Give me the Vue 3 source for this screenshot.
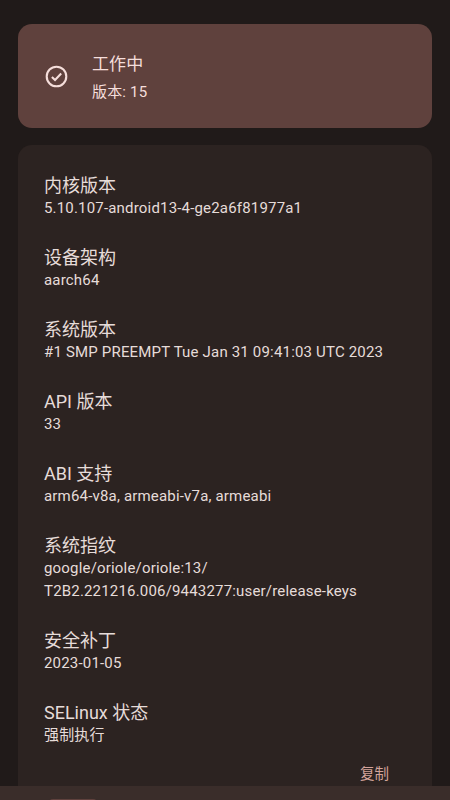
<template>
  <div class="screen">
    <main class="content">
      <section class="status-card">
        <svg class="status-icon" viewBox="0 0 24 24" fill="none" stroke="currentColor" stroke-width="2">
          <circle cx="12" cy="12" r="9.4" />
          <path d="M7.6 12.4l3 3 5.9-6.2" />
        </svg>
        <div class="status-text">
          <h2>工作中</h2>
          <p>版本: 15</p>
        </div>
      </section>

      <section class="info-card">
        <div v-for="item in items" :key="item.label" class="info-item">
          <h3>{{ item.label }}</h3>
          <p>{{ item.value }}</p>
        </div>
        <div class="copy-row">
          <span>复制</span>
        </div>
      </section>
    </main>
    <nav class="bottom-bar">
      <span class="nav-pill"></span>
    </nav>
  </div>
</template>

<script setup>
const items = [
  { label: '内核版本', value: '5.10.107-android13-4-ge2a6f81977a1' },
  { label: '设备架构', value: 'aarch64' },
  { label: '系统版本', value: '#1 SMP PREEMPT Tue Jan 31 09:41:03 UTC 2023' },
  { label: 'API 版本', value: '33' },
  { label: 'ABI 支持', value: 'arm64-v8a, armeabi-v7a, armeabi' },
  { label: '系统指纹', value: 'google/oriole/oriole:13/\nT2B2.221216.006/9443277:user/release-keys' },
  { label: '安全补丁', value: '2023-01-05' },
  { label: 'SELinux 状态', value: '强制执行' }
]
</script>

<style scoped>
.screen {
  height: 800px;
  overflow: hidden;
  display: flex;
  flex-direction: column;
  background: #201a19;
  color: #ede0dd;
  font-family: Roboto, "Noto Sans CJK SC", sans-serif;
}

.content {
  flex: 1;
  min-height: 0;
  padding: 24px 18px 0;
  overflow: hidden;
}

.status-card {
  height: 104px;
  box-sizing: border-box;
  display: flex;
  align-items: center;
  gap: 23px;
  padding: 2px 26px 0;
  border-radius: 14px;
  background: #5f413d;
  color: #f5dedb;
}

.status-icon {
  width: 25px;
  height: 25px;
  flex-shrink: 0;
  margin-top: -2px;
}

.status-text h2 {
  margin: 0;
  font-size: 17px;
  font-weight: 400;
  line-height: 24px;
  letter-spacing: 0.1px;
}

.status-text p {
  margin: 6px 0 0;
  font-size: 15px;
  line-height: 20px;
  letter-spacing: 0.18px;
}

.info-card {
  margin-top: 17px;
  padding: 29px 26px 40px;
  border-radius: 14px;
  background: #2c2321;
}

.info-item {
  margin-bottom: 26px;
}

.info-item h3 {
  margin: 0;
  font-size: 18px;
  font-weight: 400;
  line-height: 24px;
  color: #e6dcd9;
}

.info-item p {
  margin: -1px 0 0;
  font-size: 15px;
  line-height: 23px;
  letter-spacing: 0.18px;
  white-space: pre-line;
  color: #e6dcd9;
}

.copy-row {
  display: flex;
  justify-content: flex-end;
  margin-top: -8px;
  padding-right: 17px;
  font-size: 14.5px;
  line-height: 20px;
  color: #d4a39b;
}

.bottom-bar {
  height: 14px;
  flex-shrink: 0;
  background: #3a2d2a;
}

.nav-pill {
  display: block;
  width: 48px;
  height: 6px;
  margin: 13px 0 0 49px;
  border-radius: 4px 4px 0 0;
  background: #5f413d;
}
</style>
